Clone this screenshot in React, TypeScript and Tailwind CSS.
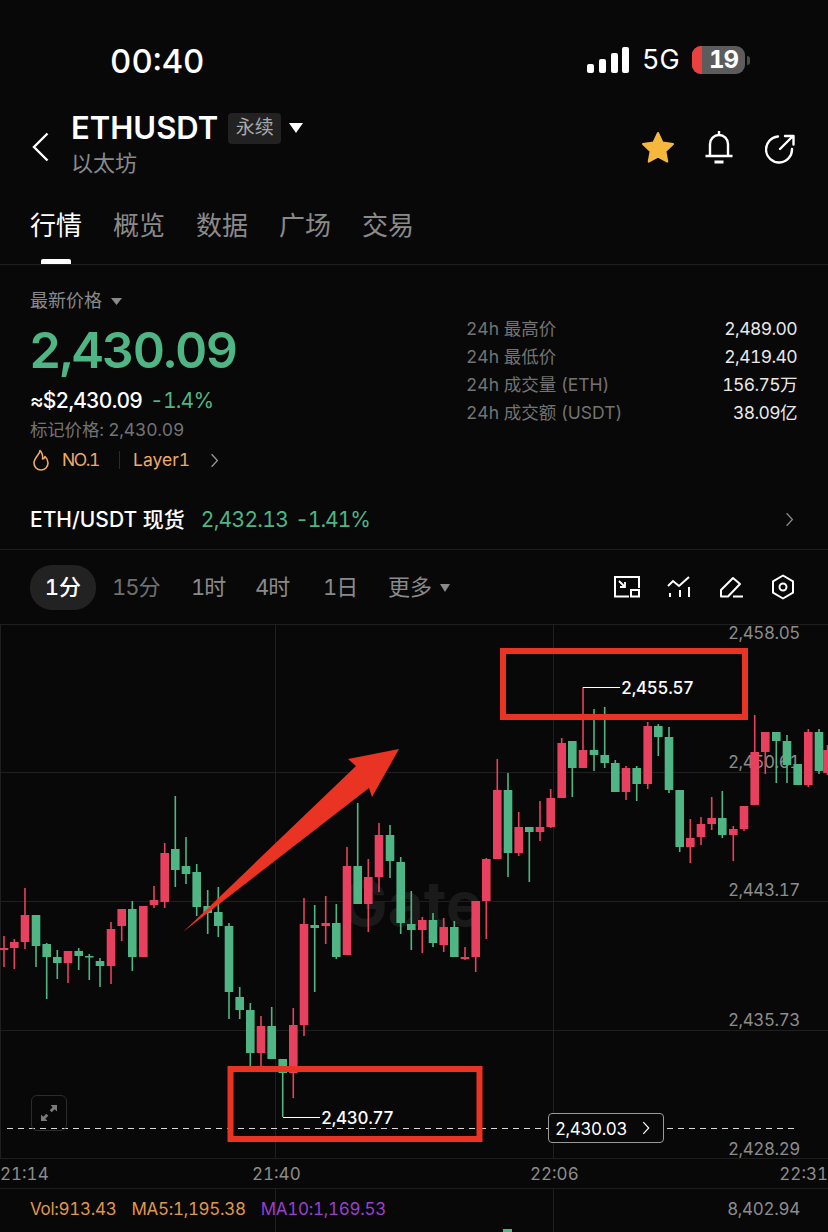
const G = "#4fb584";
const R = "#e8405f";
type C = [number, number, number, number, number, number];
// x, wickTop, wickBottom, bodyTop, bodyBottom, 0 = green, 1 = red
const candles: C[] = [
  [4,936,967,948,950,1],[14.3,939,969,942,948,1],[25,888,949,915,942,1],[36,915,967,915,946,0],
  [46.7,943,999,944,957,0],[57.3,950,979,957,963,0],[68,951,983,951,963,1],[78.7,948,970,951,956,0],
  [89.3,954,980,956,957.5,0],[100,958,987,961,966,0],[111,922,984,929,966,1],[121.7,909,941,909,926,1],
  [132.3,901,971,909,957,0],[143.3,906,957,906,957,1],[154,886,908,900,905,1],[164.7,843,908,853,902,1],
  [175.3,796,887,849,870,0],[186,837,884,866,874,0],[196.7,864,916,872,907,0],[207.7,890,934,906,913,0],
  [218.3,887,937,912,926,0],[229,923,1019,926,992,0],[239.7,987,1019,997,1010,0],[250.3,1003,1070,1010,1053,0],
  [261,1016,1072,1026,1053,1],[271.7,1007,1059,1026,1059,0],[282.7,1059,1117,1059,1073,0],[293.3,1008,1098,1025,1073,1],
  [304,898,1036,924,1025,1],[314.7,905,992,925,928,0],[325.7,896,944,923,926,1],[336.3,904,959,923,957,0],
  [347,847,955,866,955,1],[357.7,803,904,866,904,0],[368.3,859,932,877,904,1],[379,823,892,835,877,1],
  [390,825,878,835,861,0],[400.7,857,934,862,923,0],[411.3,891,950,924,930,0],[422.3,917,953,920,930,1],
  [433,913,947,920,943,0],[443.7,918,952,927,945,1],[454.3,921,957,927,957,0],[465,947,960,957,959,1],
  [475.7,901,972,901,957,1],[486.3,858,939,859,901,1],[497.3,759,859,790,859,1],[508,773,877,790,853,0],
  [518.7,812,856,827,853,1],[529.3,827,882,827,832,0],[540,801,841,827,832,1],[550.7,789,828,798,827,1],
  [561.7,738,798,743,798,1],[572.3,741,797,741,768,0],[583,687,768,750,768,1],[594,709,771,750,755,0],
  [604.7,707,768,755,763,0],[615.3,760,792,763,792,0],[626,766,800,768,792,1],[636.7,766,801,768,784,0],
  [647.7,722,789,726,784,1],[658.3,724,756,726,737,0],[669,727,793,737,790,0],[679.7,790,852,790,847,0],
  [690.3,819,863,838,847,1],[701,817,845,824,837,1],[711.7,797,830,818,824,1],[722.3,791,838,818,835,0],
  [733.3,826,861,829,835,1],[744,806,831,806,829,1],[754.7,715,805,752,805,1],[765.3,732,774,732,752,1],
  [776.3,732,783,732,741,0],[787,735,783,741,765,0],[797.7,764,785,764,785,0],[808.3,729,787,732,785,1],
  [819,729,774,732,771,0],[827.5,745,775,750,773,1],
];
const axis: [string, number][] = [["2,458.05",639],["2,450.61",768],["2,443.17",896],["2,435.73",1026],["2,428.29",1155]];

function Chev({ className }: { className: string }) {
  return (
    <svg className={className} viewBox="0 0 10 18" fill="none" stroke="currentColor" strokeWidth="1.5">
      <path d="M1.5 1.5 8.5 9l-7 7.5" />
    </svg>
  );
}

function Chart() {
  return (
    <div className="relative h-[534px] border-b border-[#1e1e1e]">
      <svg className="absolute inset-0 overflow-visible" width="828" height="534" viewBox="0 625 828 534">
        <g stroke="#1f1f1f" strokeWidth="1">
          {[772, 901, 1030].map((y) => <line key={y} x1="0" x2="828" y1={y + 0.5} y2={y + 0.5} />)}
          {[0.5, 275.5, 553.5].map((x) => <line key={x} x1={x} x2={x} y1="625" y2="1159" />)}
        </g>
        <g fontFamily="Inter, sans-serif" fontSize="17" letterSpacing="-0.4" fill="#8c8c8c" textAnchor="end">
          {axis.map(([t, y]) => <text key={t} x="800" y={y}>{t}</text>)}
        </g>
        <text x="412" y="926" textAnchor="middle" fontFamily="Inter, sans-serif" fontWeight="700" fontSize="62" fill="#1a1a1a">Gate</text>
        {candles.map(([x, wt, wb, bt, bb, c]) => (
          <g key={x} fill={c ? R : G}>
            <rect x={x - 0.8} y={wt} width="1.6" height={wb - wt} />
            <rect x={x - 4.3} y={bt} width="8.6" height={bb - bt} />
          </g>
        ))}
        <line x1="7" x2="795" y1="1128.5" y2="1128.5" stroke="#d8d8d8" strokeWidth="1.2" strokeDasharray="6 5" />
        <path d="M583 687.5H620M283 1117.5H320" stroke="#fff" strokeWidth="1.2" fill="none" />
        <g fontFamily="Inter, sans-serif" fontSize="17" fontWeight="500" letterSpacing="-0.3" fill="#fff">
          <text x="621" y="694">2,455.57</text>
          <text x="321" y="1124">2,430.77</text>
        </g>
        <rect x="503" y="651" width="242" height="66" fill="none" stroke="#e93424" strokeWidth="6" />
        <rect x="230.5" y="1069" width="249" height="70" fill="none" stroke="#e93424" strokeWidth="6" />
        <polygon points="183,932 356,766 348,759 399,749 372,797 369,788" fill="#e93424" />
      </svg>
      <div className="absolute left-[31px] top-[470px] flex h-[36px] w-[36px] items-center justify-center rounded-md border border-[#2c2c2c]">
        <svg width="20" height="20" viewBox="0 0 20 20" fill="#7a7a7a">
          <path d="M11.500 2H18v6.500l-2.300-2.300-3 3-2-2 3-3zM8.500 18H2v-6.500l2.300 2.300 3-3 2 2-3 3z" />
        </svg>
      </div>
      <div className="absolute left-[548px] top-[488px] flex h-[30px] w-[116px] items-center justify-between rounded border border-[#9a9a9a] bg-[#080808] pl-[6px] pr-[13px] pt-[3px] text-[17px] tracking-[-0.4px] text-white">
        <span>2,430.03</span>
        <Chev className="-mt-[3px] h-[14px] w-[8px]" />
      </div>
    </div>
  );
}

export default function App() {
  return (
    <div className="h-[1232px] w-[828px] overflow-hidden bg-[#080808] font-[Inter,'Noto_Sans_CJK_SC',sans-serif] tabular-nums text-white">
      {/* status bar */}
      <div className="flex h-[100px] items-start justify-between pl-[110px] pr-[78px] pt-[43px]">
        <span className="text-[33px] font-medium leading-[36px]">00:40</span>
        <div className="mt-[3px] flex items-center">
          <svg width="43" height="28" viewBox="0 0 43 28" fill="#fff">
            <rect x="0" y="18" width="7" height="9" rx="2" />
            <rect x="12" y="13" width="7" height="14" rx="2" />
            <rect x="24" y="7" width="7" height="20" rx="2" />
            <rect x="35" y="1" width="7" height="26" rx="2" />
          </svg>
          <span className="ml-[12px] w-[37px] text-[27px] leading-[28px]">5G</span>
          <div className="ml-[13px] flex h-[28px] w-[53px] overflow-hidden rounded-[9px] bg-[#5c5c5c]">
            <div className="w-[10px] bg-[#ea4040]" />
            <span className="flex-1 text-center text-[24px] font-bold leading-[28px] tracking-[-1px]">19</span>
          </div>
          <div className="ml-[2px] h-[9px] w-[3px] rounded-r bg-[#4a4a4a]" />
        </div>
      </div>

      {/* header */}
      <div className="relative flex h-[90px] items-start">
        <svg className="ml-[32px] mt-[32px]" width="17" height="30" viewBox="0 0 17 30" fill="none" stroke="#fff" strokeWidth="2.4">
          <path d="M15.5 1.5 2 15l13.5 13.5" />
        </svg>
        <div className="ml-[22px] mt-[10px]">
          <div className="flex items-center">
            <span className="text-[31px] font-semibold leading-[36px]">ETHUSDT</span>
            <span className="ml-[10px] flex h-[31px] w-[53px] items-center justify-center rounded-[4px] bg-[#222] text-[19px] text-[#a8a8a8]">永续</span>
            <svg className="ml-[8px]" width="14" height="10" viewBox="0 0 14 10" fill="#fff"><path d="M0 0h14L7 10z" /></svg>
          </div>
          <div className="mt-[3px] text-[22px] leading-[28px] text-[#8a8a8a]">以太坊</div>
        </div>
        <div className="ml-auto mr-[33px] mt-[30px] flex items-center gap-[29px]">
          <svg width="34" height="33" viewBox="0 0 34 33" fill="#f5b83d" stroke="#f5b83d" strokeWidth="2" strokeLinejoin="round">
            <path d="M17 2l4.6 9.6 10.4 1.4-7.6 7.2 1.9 10.4L17 25.5 7.700 30.600l1.900-10.400L2 13l10.400-1.400z" />
          </svg>
          <svg width="30" height="34" viewBox="0 0 30 34" fill="none" stroke="#fff" strokeWidth="2.4" strokeLinejoin="round">
            <path d="M15 1v4M6 26V14a9 9 0 0 1 18 0v12M1.500 26h27" />
            <path d="M10.500 32h9" strokeWidth="3" />
          </svg>
          <svg className="translate-x-[2px] translate-y-[2px]" width="32" height="30" viewBox="0 0 32 30" fill="none" stroke="#fff" strokeWidth="2.400" strokeLinecap="round" strokeLinejoin="round">
            <path d="M13 2.500A13 13 0 1 0 27 15" />
            <path d="M15 15 28 2M20 2h8.500v8.500" />
          </svg>
        </div>
      </div>

      {/* tabs */}
      <div className="relative flex h-[75px] gap-[31px] border-b border-[#1e1e1e] pl-[30px] pt-[18px] text-[26px] leading-[36px] text-[#8a8a8a]">
        <span className="text-white">行情</span>
        <span>概览</span>
        <span>数据</span>
        <span>广场</span>
        <span>交易</span>
        <div className="absolute bottom-0 left-[41px] h-[5px] w-[30px] rounded-t-[2px] bg-white" />
      </div>

      {/* stats */}
      <div className="flex h-[225px] justify-between pl-[30px] pr-[31px]">
        <div>
          <div className="mt-[24px] flex items-center text-[18px] leading-[24px] text-[#8a8a8a]">
            最新价格
            <svg className="ml-[9px]" width="11" height="7" viewBox="0 0 11 7" fill="#8a8a8a"><path d="M0 0h11L5.500 7z" /></svg>
          </div>
          <div className="-ml-[1px] mt-[8px] text-[50px] font-semibold leading-[58px] tracking-[-1.7px] text-[#50b584]">2,430.09</div>
          <div className="mt-[8px] flex text-[21px] leading-[28px]">
            <span className="font-medium tracking-[-0.8px]">≈$2,430.09</span>
            <span className="ml-[8px] tracking-[-0.8px] text-[#50b584]">-1.4%</span>
          </div>
          <div className="mt-[3px] text-[17.5px] leading-[24px] tracking-[-0.2px] text-[#737373]">标记价格: 2,430.09</div>
          <div className="mt-[6px] flex items-center text-[17.5px] leading-[24px] text-[#eea96c]">
            <svg className="ml-[3px]" width="16" height="22" viewBox="0 0 16 22" fill="none" stroke="#eea96c" strokeWidth="1.600" strokeLinejoin="round">
              <path d="M7 1.500C7 5.500 1 8.500 1 14a7 7 0 0 0 14 0c0-3-1.500-5-3-6.500-.5 1.500-1.500 2.500-2.500 2.500.5-3.500-.5-6.500-2.500-8.500z" />
            </svg>
            <span className="ml-[13px] w-[57px] tracking-[-1.4px]">NO.1</span>
            <span className="h-[18px] w-px bg-[#2a2a2a]" />
            <span className="ml-[13px]">Layer1</span>
            <Chev className="ml-[20px] h-[15px] w-[9px] text-[#9a9a9a]" />
          </div>
        </div>
        <div className="mt-[50px] w-[331px] text-[17.500px] leading-[28px]">
          {[
            ["24h 最高价", "2,489.00"],
            ["24h 最低价", "2,419.40"],
            ["24h 成交量 (ETH)", "156.75万"],
            ["24h 成交额 (USDT)", "38.09亿"],
          ].map(([a, b]) => (
            <div key={a} className="flex justify-between">
              <span className="text-[#737373]">{a}</span>
              <span className="tracking-[-0.6px] text-[#e8e8e8]">{b}</span>
            </div>
          ))}
        </div>
      </div>

      {/* spot row */}
      <div className="flex h-[60px] items-start border-b border-[#1e1e1e] pl-[30px] pr-[34px] pt-[15px] text-[21px] leading-[30px]">
        <span className="font-medium">ETH/USDT 现货</span>
        <span className="ml-[16px] tracking-[-0.7px] text-[#50b584]">2,432.13</span>
        <span className="ml-[7px] tracking-[-1px] text-[#50b584]">-1.41%</span>
        <Chev className="ml-auto mt-[7px] h-[15px] w-[9px] text-[#8a8a8a]" />
      </div>

      {/* toolbar */}
      <div className="flex h-[75px] items-start border-b border-[#1e1e1e] pl-[30px] pr-[33px] pt-[15px]">
        <span className="flex h-[45px] w-[66px] items-center justify-center whitespace-nowrap rounded-[22px] bg-[#222] text-[22px] font-medium">1分</span>
        <div className="flex h-[45px] items-center whitespace-nowrap text-[22px] text-[#8a8a8a]">
          <span className="ml-[16px] w-[46px] tracking-[-1px] text-[#707070]">15分</span>
          <span className="ml-[33px] w-[34px] tracking-[-1px]">1时</span>
          <span className="ml-[30px] w-[35px] tracking-[-1px]">4时</span>
          <span className="ml-[33px] w-[33px] tracking-[-1px]">1日</span>
          <span className="ml-[32px]">更多</span>
          <svg className="ml-[8px]" width="10" height="8" viewBox="0 0 10 8" fill="#8a8a8a"><path d="M0 0h10L5 8z" /></svg>
        </div>
        <div className="ml-auto mt-[9px] flex items-center gap-[27px]">
          <svg width="26" height="22" viewBox="0 0 26 22" fill="none" stroke="#fff" strokeWidth="2">
            <path d="M15 20.500H1V1h24v11" />
            <rect x="17" y="14" width="8" height="6.500" />
            <path d="M5 5l6 6M11 6v5H6" strokeWidth="1.800" />
          </svg>
          <svg width="25" height="22" viewBox="0 0 25 22" fill="none" stroke="#fff" strokeWidth="2">
            <path d="M1 10l5-5 6 5 10-9" />
            <path d="M3 17v4M13 14v7M22 11v10" />
          </svg>
          <svg width="25" height="22" viewBox="0 0 25 22" fill="none" stroke="#fff" strokeWidth="2" strokeLinejoin="round">
            <path d="M2 20.500V14L14 2l7 6-12 12.500zM14 20.500h10" />
          </svg>
          <svg width="24" height="26" viewBox="0 0 24 26" fill="none" stroke="#fff" strokeWidth="2" strokeLinejoin="round">
            <path d="M12 1.500l10 5.800v11.400l-10 5.800-10-5.800V7.300z" />
            <circle cx="12" cy="13" r="3.500" />
          </svg>
        </div>
      </div>

      <Chart />

      {/* time axis */}
      <div className="relative h-[30px] border-b border-[#1e1e1e] text-[17px] leading-[30px] text-[#8c8c8c]">
        <span className="absolute left-0 top-0">21:14</span>
        <span className="absolute left-[252px] top-0">21:40</span>
        <span className="absolute left-[530px] top-0">22:06</span>
        <span className="absolute right-0 top-0">22:31</span>
      </div>

      {/* volume row */}
      <div className="relative flex h-[43px] items-start pl-[30px] pr-[28px] pt-[8px] text-[17px] leading-[24px] tracking-[-0.3px]">
        <div className="absolute left-[275px] top-0 h-full w-px bg-[#1f1f1f]" />
        <div className="absolute left-[553px] top-0 h-full w-px bg-[#1f1f1f]" />
        <div className="absolute bottom-0 left-[503px] h-[3px] w-[9px] bg-[#4fb584]" />
        <span className="text-[#e0974a]">Vol:913.43</span>
        <span className="ml-[15px] text-[#e0974a]">MA5:1,195.38</span>
        <span className="ml-[15px] text-[#9a3fd0]">MA10:1,169.53</span>
        <span className="ml-auto text-[#8c8c8c]">8,402.94</span>
      </div>
    </div>
  );
}
